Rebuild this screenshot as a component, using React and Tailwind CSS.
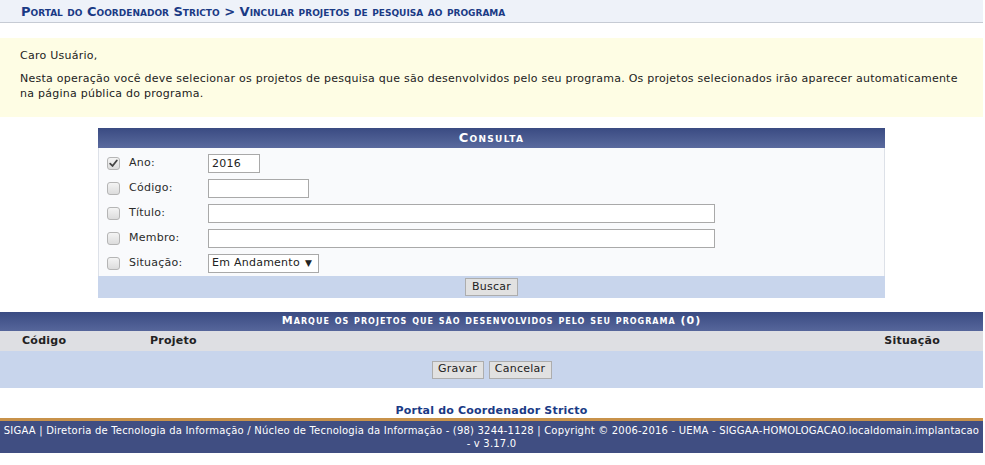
import React from "react";

function Check({ checked }) {
  return (
    <span className="inline-flex h-[13px] w-[13px] items-center justify-center rounded-[3px] border border-[#b5b5b5] bg-gradient-to-b from-[#f4f4f4] to-[#dcdcdc]">
      {checked && (
        <svg width="9" height="9" viewBox="0 0 9 9">
          <path d="M1.2 4.6 L3.5 7 L7.8 1.5" fill="none" stroke="#444" strokeWidth="1.8" strokeLinecap="round" strokeLinejoin="round" />
        </svg>
      )}
    </span>
  );
}

function Row({ label, checked, children }) {
  return (
    <div className="flex h-[25px] items-center">
      <div className="flex w-[30px] pl-[8px]">
        <Check checked={checked} />
      </div>
      <div className="w-[79px] text-[#2a2a2a]">{label}</div>
      <div className="flex items-center">{children}</div>
    </div>
  );
}

function Input({ w, value }) {
  return (
    <div
      className={`h-[19px] border border-[#a9a9a9] bg-white px-[3px] leading-[17px] text-[#222] ${w}`}
    >
      {value}
    </div>
  );
}

function Btn({ children, w }) {
  return (
    <div className={`flex h-[18px] items-center justify-center border border-[#adadad] bg-[#e1e1e1] text-[11px] text-[#222] ${w}`}>
      {children}
    </div>
  );
}

export default function App() {
  return (
    <div className="w-[983px] bg-white font-['Verdana','DejaVu_Sans',sans-serif] text-[11px] tracking-[0.25px] text-[#222]">
      {/* Breadcrumb */}
      <div className="flex h-[23px] items-center border-b border-[#c6cbd4] bg-[#eef2f9] pl-[21px] pt-[1px]">
        <span className="text-[13px] font-bold tracking-[0px] text-[#1a3a85] [font-variant:small-caps]">
          Portal do Coordenador Stricto &gt; Vincular projetos de pesquisa ao programa
        </span>
      </div>

      {/* Info box */}
      <div className="mt-[15px] bg-[#fefde4] px-[20px] pb-[16px] pt-[10px] text-[#222]">
        <p className="leading-[15px]">Caro Usuário,</p>
        <p className="mt-[8px] leading-[15px]">
          Nesta operação você deve selecionar os projetos de pesquisa que são desenvolvidos pelo seu programa. Os projetos selecionados irão aparecer automaticamente na página pública do programa.
        </p>
      </div>

      {/* Consulta */}
      <div className="ml-[98px] mt-[11px] w-[787px]">
        <div className="flex h-[20px] items-center justify-center bg-gradient-to-b from-[#3a4b82] to-[#5a6a9e] text-[13px] font-bold tracking-[1.3px] text-white [font-variant:small-caps]">
          Consulta
        </div>
        <div className="border-x border-[#dde1e8] bg-[#f9fafc] pt-[3px]">
          <Row label="Ano:" checked>
            <Input w="w-[52px]" value="2016" />
          </Row>
          <Row label="Código:">
            <Input w="w-[101px]" />
          </Row>
          <Row label="Título:">
            <Input w="w-[507px]" />
          </Row>
          <Row label="Membro:">
            <Input w="w-[507px]" />
          </Row>
          <Row label="Situação:">
            <div className="flex h-[19px] w-[111px] items-center border border-[#a9a9a9] bg-white pl-[3px] text-[#222]">
              Em Andamento <span className="ml-[5px] text-[9px]">▼</span>
            </div>
          </Row>
        </div>
        <div className="flex h-[22px] items-center justify-center bg-[#c8d5ec]">
          <Btn w="w-[53px]">Buscar</Btn>
        </div>
      </div>

      {/* Marque */}
      <div className="mt-[14px]">
        <div className="flex h-[19px] items-center justify-center bg-gradient-to-b from-[#3a4b82] to-[#56669b] text-[11px] font-bold tracking-[1px] text-white [font-variant:small-caps]">
          Marque os projetos que são desenvolvidos pelo seu programa (0)
        </div>
        <div className="flex h-[20px] items-center bg-[#dedfe3] font-bold text-[#222]">
          <span className="ml-[22px] w-[128px]">Código</span>
          <span className="flex-1">Projeto</span>
          <span className="mr-[43px]">Situação</span>
        </div>
        <div className="flex h-[37px] items-center justify-center gap-[5px] bg-[#c8d5ec]">
          <Btn w="w-[52px]">Gravar</Btn>
          <Btn w="w-[63px]">Cancelar</Btn>
        </div>
      </div>

      {/* Back link */}
      <div className="mt-[16px] text-center text-[11px] font-bold leading-[13px] tracking-[0.2px] text-[#1a3a85]">
        Portal do Coordenador Stricto
      </div>

      {/* Footer */}
      <div className="mt-[1px] border-t-[3px] border-[#c8924a] bg-[#404e82] pb-[3px] pt-[3px] text-center text-[10px] leading-[13px] tracking-[0.2px] text-white">
        <span className="whitespace-nowrap">
          SIGAA | Diretoria de Tecnologia da Informação / Núcleo de Tecnologia da Informação - (98) 3244-1128 | Copyright © 2006-2016 - UEMA - SIGGAA-HOMOLOGACAO.localdomain.implantacao
        </span>
        <br />- v 3.17.0
      </div>
    </div>
  );
}
